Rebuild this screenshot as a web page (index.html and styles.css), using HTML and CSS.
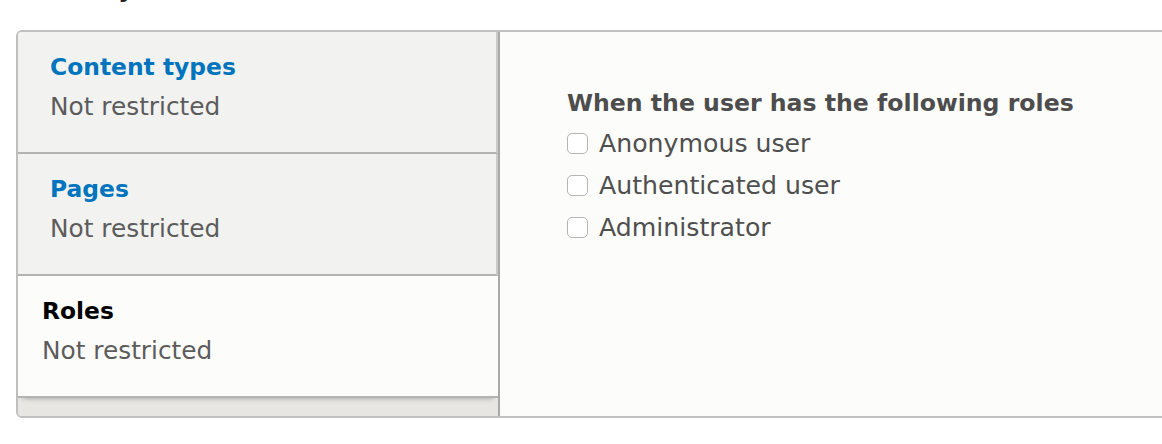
FILE: index.html
```html
<!DOCTYPE html>
<html>
<head>
<meta charset="utf-8">
<link rel="stylesheet" href="styles.css">
</head>
<body>
<h2 class="page-title">Visibility</h2>
<div class="vtabs">
  <ul class="vtabs-menu">
    <li class="vtab">
      <a class="vtab-title" href="#">Content types</a>
      <span class="vtab-summary">Not restricted</span>
    </li>
    <li class="vtab">
      <a class="vtab-title" href="#">Pages</a>
      <span class="vtab-summary">Not restricted</span>
    </li>
    <li class="vtab is-selected">
      <a class="vtab-title" href="#">Roles</a>
      <span class="vtab-summary">Not restricted</span>
    </li>
  </ul>
  <div class="vtabs-pane">
    <div class="pane-heading">When the user has the following roles</div>
    <label class="check-row"><input type="checkbox" class="check"><span>Anonymous user</span></label>
    <label class="check-row"><input type="checkbox" class="check"><span>Authenticated user</span></label>
    <label class="check-row"><input type="checkbox" class="check"><span>Administrator</span></label>
  </div>
</div>
</body>
</html>
```

FILE: styles.css
```css
html, body {
  margin: 0;
  padding: 0;
  background: #ffffff;
  overflow: hidden;
}
body {
  font-family: "DejaVu Sans", "Lucida Grande", sans-serif;
  width: 1162px;
  height: 444px;
}
.page-title {
  font-size: 24px;
  line-height: 24px;
  height: 24px;
  font-weight: bold;
  color: #222;
  margin: -23px 0 0 16px;
}
.vtabs {
  margin: 29px 0 0 16px;
  width: 1250px;
  border: 2px solid #bfbfbf;
  border-radius: 6px;
  display: flex;
  height: 384px;
  overflow: hidden;
}
.vtabs-menu {
  list-style: none;
  margin: 0;
  padding: 0;
  width: 480px;
  flex: none;
  background: #e7e6e2;
}
.vtab {
  box-sizing: content-box;
  padding: 15px 0 0 32px;
  height: 105px;
  background: #f2f2f0;
  border-bottom: 2px solid #b3b3b3;
  border-right: 2px solid #cbcbcb;
  display: flex;
  flex-direction: column;
}
.vtab.is-selected {
  padding-left: 24px;
  background: #fcfcfa;
  border-right: none;
  box-shadow: 0 5px 5px -5px rgba(0, 0, 0, 0.35);
  position: relative;
}
.vtab-title {
  font-size: 23.4px;
  line-height: 40px;
  font-weight: bold;
  color: #0074bd;
  text-decoration: none;
}
.is-selected .vtab-title {
  color: #000;
}
.vtab-summary {
  font-size: 24.8px;
  line-height: 40px;
  color: #5c5c5c;
}
.vtabs-pane {
  flex: 1;
  background: #fcfcfa;
  border-left: 2px solid #a9a9a9;
  padding: 55px 0 0 67px;
}
.pane-heading {
  font-size: 23.6px;
  line-height: 32px;
  font-weight: bold;
  color: #4d4d4d;
  margin-bottom: 3px;
}
.check-row {
  display: flex;
  align-items: center;
  height: 42px;
  font-size: 25.2px;
  color: #4f4f4f;
}
.check {
  appearance: none;
  -webkit-appearance: none;
  width: 21px;
  height: 21px;
  margin: 0 11px 0 0;
  border: 1px solid #b5b5b5;
  border-radius: 5px;
  background: #fff;
  box-sizing: border-box;
}
```
